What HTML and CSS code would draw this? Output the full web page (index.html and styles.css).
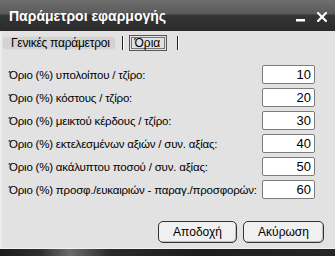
FILE: index.html
```html
<!DOCTYPE html>
<html lang="el">
<head>
<meta charset="utf-8">
<link rel="stylesheet" href="styles.css">
</head>
<body>
<div class="window">
  <div class="titlebar">
    <span class="title">Παράμετροι εφαρμογής</span>
    <span class="controls">
      <svg class="ctl-min" width="9" height="3" viewBox="0 0 9 3"><rect x="0" y="0" width="9" height="2.5" fill="#fff"/></svg>
      <svg class="ctl-close" width="10" height="10" viewBox="0 0 10 10"><path d="M1 1 L9 9 M9 1 L1 9" stroke="#fff" stroke-width="2.2" stroke-linecap="square"/></svg>
    </span>
  </div>
  <div class="body">
    <div class="tabs">
      <span class="tab">Γενικές παράμετροι</span>
      <span class="sep"></span>
      <span class="tab-active"><span class="tab-inner">Όρια</span></span>
      <span class="sep"></span>
    </div>
    <div class="form">
      <label class="lbl">Όριο (%) υπολοίπου / τζίρο:</label><div class="inp">10</div>
      <label class="lbl">Όριο (%) κόστους / τζίρο:</label><div class="inp">20</div>
      <label class="lbl">Όριο (%) μεικτού κέρδους / τζίρο:</label><div class="inp">30</div>
      <label class="lbl">Όριο (%) εκτελεσμένων αξιών / συν. αξίας:</label><div class="inp">40</div>
      <label class="lbl">Όριο (%) ακάλυπτου ποσού / συν. αξίας:</label><div class="inp">50</div>
      <label class="lbl">Όριο (%) προσφ./ευκαιριών - παραγ./προσφορών:</label><div class="inp">60</div>
    </div>
    <div class="buttons">
      <button class="btn btn-ok">Αποδοχή</button>
      <button class="btn btn-cancel">Ακύρωση</button>
    </div>
  </div>
  <div class="bottom"></div>
</div>
</body>
</html>
```

FILE: styles.css
```css
html, body {
  margin: 0;
  padding: 0;
  background: #2a2a2a;
}
.window {
  width: 335px;
  height: 256px;
  display: flex;
  flex-direction: column;
  font-family: "Liberation Sans", Arial, sans-serif;
  font-size: 11px;
  color: #000;
}
.titlebar {
  height: 31px;
  flex: none;
  display: flex;
  align-items: flex-end;
  justify-content: space-between;
  padding: 0 8px 7px 9px;
  box-sizing: border-box;
  background: linear-gradient(#6e6e6e 0px, #5a5a5a 14px, #363636 15px, #2b2b2b 30px, #2b2b2b 31px);
}
.title {
  color: #fff;
  font-weight: bold;
  font-size: 14px;
  line-height: 16px;
}
.controls {
  display: flex;
  align-items: flex-end;
  gap: 12px;
  padding-bottom: 2px;
}
.ctl-min { display: block; }
.ctl-close { display: block; }
.body {
  flex: 1;
  background: #e2e2e2;
  border-left: 2px solid #ececec;
  border-bottom: 1px solid #f2f2f2;
  display: flex;
  flex-direction: column;
}
.tabs {
  display: flex;
  align-items: center;
  height: 14px;
  margin-top: 5px;
  padding-left: 1px;
  font-size: 12px;
}
.tab {
  background: #d3d3d3;
  border-radius: 3px;
  padding: 0 5px 0 8px;
  height: 12px;
  line-height: 12px;
  box-shadow: 0 0 2px #d6d6d6;
  letter-spacing: -0.25px;
}
.sep {
  width: 1px;
  height: 14px;
  background: #222;
  border-right: 1px solid #fff;
  margin: 0 5px 0 7px;
}
.tab-active {
  border: 1px solid #555;
  padding: 1px;
  margin: 0 3px 0 0;
}
.tab-inner {
  display: block;
  border: 1px solid #777;
  padding: 0 4px 0 3px;
  line-height: 10px;
  height: 10px;
}
.form {
  display: grid;
  grid-template-columns: 253px 53px;
  row-gap: 4px;
  margin-top: 15px;
  padding-left: 7px;
  align-items: center;
}
.lbl {
  white-space: nowrap;
  font-size: 11.5px;
  letter-spacing: -0.2px;
}
.inp {
  height: 17px;
  border: 1px solid #7c7c7c;
  border-radius: 2px;
  background: #fff;
  text-align: right;
  padding-right: 3px;
  line-height: 17px;
  font-size: 13px;
}
.buttons {
  display: flex;
  justify-content: flex-end;
  gap: 6px;
  padding-right: 11px;
  margin-top: 22px;
}
.btn {
  font-family: "Liberation Sans", Arial, sans-serif;
  font-size: 12px;
  height: 22px;
  background: #f0f0f0;
  border: 1px solid #333;
  border-radius: 5px;
  box-shadow: inset -1px -1px 0 #bdbdbd;
  padding: 0;
  color: #000;
}
.btn-ok { width: 79px; }
.btn-cancel { width: 81px; }
.bottom {
  height: 7px;
  flex: none;
  background: linear-gradient(90deg, #1c1c1c 0px, #2e2e2e 40px, #6a6a6a 70px, #2a2a2a 110px, #1d1d1d 200px, #262626 335px);
}
```
